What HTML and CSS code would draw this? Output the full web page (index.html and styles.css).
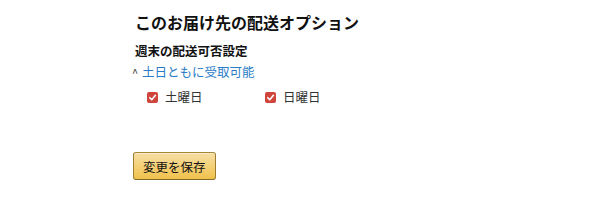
FILE: index.html
```html
<!DOCTYPE html>
<html lang="ja">
<head>
<meta charset="utf-8">
<link rel="stylesheet" href="styles.css">
</head>
<body>
<div class="page">
  <h1 class="title">このお届け先の配送オプション</h1>
  <h2 class="subtitle">週末の配送可否設定</h2>
  <a class="toggle" href="#"><span class="caret">^</span>土日ともに受取可能</a>
  <div class="days">
    <label class="day"><span class="box"><svg viewBox="0 0 12 12" width="11" height="11"><path d="M3 6.2 L5.2 8.4 L9.2 3.6" fill="none" stroke="#fff" stroke-width="1.7" stroke-linecap="round" stroke-linejoin="round"/></svg></span>土曜日</label>
    <label class="day"><span class="box"><svg viewBox="0 0 12 12" width="11" height="11"><path d="M3 6.2 L5.2 8.4 L9.2 3.6" fill="none" stroke="#fff" stroke-width="1.7" stroke-linecap="round" stroke-linejoin="round"/></svg></span>日曜日</label>
  </div>
  <button class="save" type="button">変更を保存</button>
</div>
</body>
</html>
```
FILE: styles.css
```css
html, body {
  margin: 0;
  padding: 0;
  background: #fff;
}
body {
  font-family: "Noto Sans CJK JP", "Noto Sans", sans-serif;
  color: #111;
}
.page {
  padding: 10px 0 0 135px;
  display: flex;
  flex-direction: column;
  align-items: flex-start;
}
.title {
  margin: 0;
  font-size: 16px;
  line-height: 24px;
  font-weight: 700;
  color: #111;
}
.subtitle {
  margin: 9px 0 0 0;
  font-size: 12.5px;
  line-height: 16px;
  font-weight: 700;
  color: #111;
}
.toggle {
  margin-top: 4px;
  font-size: 12.5px;
  line-height: 18px;
  color: #2a7cc7;
  text-decoration: none;
  display: flex;
  align-items: center;
}
.caret {
  color: #333;
  font-size: 11px;
  width: 10px;
  margin-left: -3px;
  display: inline-block;
}
.days {
  display: flex;
  gap: 0;
  margin: 7px 0 0 12px;
}
.day {
  width: 118px;
  display: flex;
  align-items: center;
  font-size: 12.5px;
  line-height: 18px;
  color: #333;
}
.box {
  width: 11px;
  height: 11px;
  border-radius: 2px;
  background: #cf443b;
  margin-right: 7px;
  display: flex;
  align-items: center;
  justify-content: center;
}
.box svg {
  display: block;
}
.save {
  margin: 46px 0 0 -2px;
  height: 28px;
  padding: 0 9px;
  font-family: inherit;
  font-size: 12.5px;
  color: #111;
  border: 1px solid;
  border-color: #a88734 #9c7e31 #846a29;
  border-radius: 3px;
  background: linear-gradient(to bottom, #f7dfa5, #f0c14b);
  box-shadow: inset 0 1px 0 rgba(255,255,255,.4);
}
```
